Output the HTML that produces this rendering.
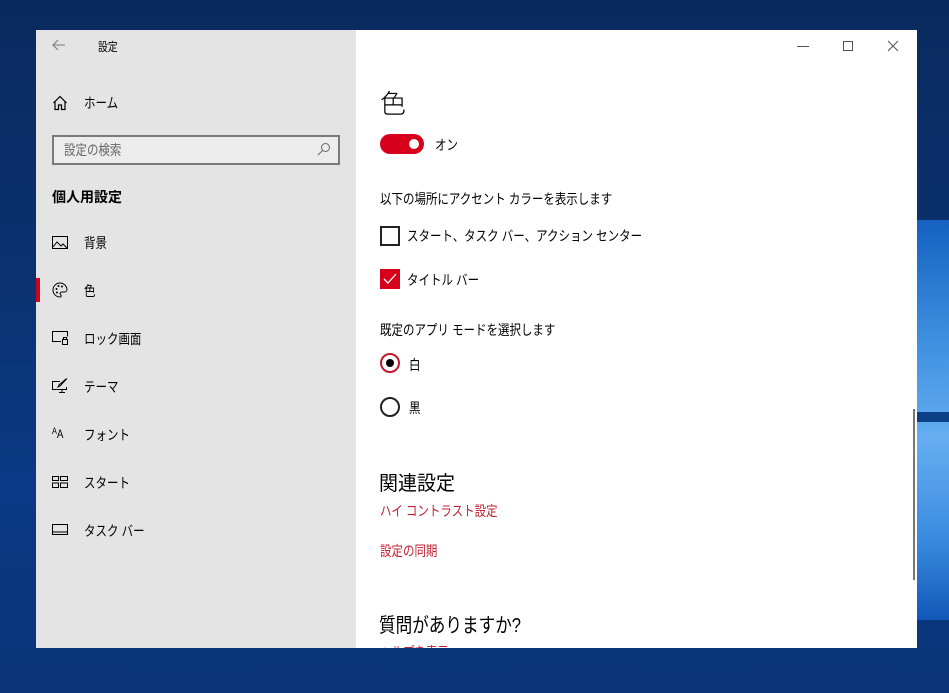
<!DOCTYPE html>
<html><head><meta charset="utf-8"><style>
*{margin:0;padding:0;box-sizing:border-box}
body{width:949px;height:693px;overflow:hidden;position:relative;font-family:"Liberation Sans","Noto Sans CJK JP",sans-serif;
background:linear-gradient(180deg,#0a2a5e 0%,#0a3270 40%,#0a3a86 70%,#093478 100%);}
.blue{position:absolute;left:917px;top:220px;width:32px;height:400px;background:linear-gradient(180deg,#1560c0 0%,#3f8fe0 30%,#64aef0 55%,#3b8ae0 80%,#1058b8 100%)}
.band{position:absolute;left:917px;top:412px;width:32px;height:10px;background:#0b3f86}
.win{position:absolute;left:36px;top:30px;width:881px;height:618px;background:#fff;overflow:hidden}
.side{position:absolute;left:0;top:0;width:320px;height:618px;background:#e4e4e4;color:#000;font-size:14px}
.t{position:absolute;white-space:nowrap;transform:scaleX(.82);transform-origin:0 0}
.n{transform:none}
.ico{position:absolute;left:16px}
.main{position:absolute;left:320px;top:0;right:0;bottom:0;font-size:14px;color:#000}
.red{color:#c31f33}
</style></head><body>
<div class="blue"></div><div class="band"></div>
<div class="win">
<div class="side">
 <svg class="ico" style="top:9px" width="14" height="12" viewBox="0 0 14 12"><path d="M13 6H1M6 1L1 6l5 5" stroke="#777" fill="none" stroke-width="1"/></svg>
 <div class="t" style="left:62px;top:8px;font-size:12px">設定</div>
 <svg class="ico" style="top:65px" width="16" height="16" viewBox="0 0 16 16"><path d="M1.5 8L8 1.5 14.5 8M3 6.5V14.5H6.5V10H9.5V14.5H13V6.5" stroke="#000" fill="none" stroke-width="1.2"/></svg>
 <div class="t" style="left:48px;top:63px">ホーム</div>
 <div style="position:absolute;left:16px;top:105px;width:288px;height:30px;border:2px solid #7a7a7a;background:#ececec"></div>
 <div class="t" style="left:28px;top:110px;color:#666">設定の検索</div>
 <svg style="position:absolute;left:281px;top:112px" width="14" height="14" viewBox="0 0 14 14"><circle cx="8.5" cy="5.5" r="4" stroke="#666" fill="none"/><path d="M5.5 8.5L1 13" stroke="#666"/></svg>
 <div class="t n" style="left:16px;top:157px;font-weight:bold">個人用設定</div>
 <svg class="ico" style="top:206px" width="16" height="13" viewBox="0 0 16 13"><rect x=".5" y=".5" width="15" height="12" stroke="#000" fill="none"/><path d="M1 11L5 6l4 4 2-2 4 4" stroke="#000" fill="none"/></svg>
 <div class="t" style="left:48px;top:203px">背景</div>
 <div style="position:absolute;left:0;top:248px;width:4px;height:24px;background:#d0021b"></div>
 <svg class="ico" style="top:252px" width="16" height="16" viewBox="0 0 16 16"><path d="M8 1a7 7 0 1 0 0 14c1.5 0 1.5-1.5.5-2.5s0-2.5 1.5-2.5h2.5A2.5 2.5 0 0 0 15 7.5 7 7 0 0 0 8 1z" stroke="#000" fill="none"/><circle cx="4.5" cy="7" r="1"/><circle cx="6.5" cy="4" r="1"/><circle cx="10" cy="4.5" r="1"/><circle cx="5" cy="10.5" r="1"/></svg>
 <div class="t" style="left:48px;top:251px">色</div>
 <svg class="ico" style="top:301px" width="16" height="14" viewBox="0 0 16 14"><path d="M9 10.5H.5V.5h15v5" stroke="#000" fill="none"/><rect x="10.5" y="8.5" width="5" height="5" stroke="#000" fill="none"/><path d="M11.5 8.5V6.5h3v2" stroke="#000" fill="none"/></svg>
 <div class="t" style="left:48px;top:299px">ロック画面</div>
 <svg class="ico" style="top:348px" width="16" height="16" viewBox="0 0 16 16"><path d="M8 3.5H.5v8h14V9M7 14.5h6M10 11.5v3" stroke="#000" fill="none"/><path d="M14.5 1L8 8l-2 1 1-2 7-6z" stroke="#000" fill="none"/></svg>
 <div class="t" style="left:48px;top:347px">テーマ</div>
 <div class="t" style="left:16px;top:396px;font-size:12px"><span style="font-size:9px;vertical-align:4px">A</span>A</div>
 <div class="t" style="left:48px;top:395px">フォント</div>
 <svg class="ico" style="top:446px" width="16" height="12" viewBox="0 0 16 12"><rect x=".5" y=".5" width="6" height="4" stroke="#000" fill="none"/><rect x="8.5" y=".5" width="7" height="4" stroke="#000" fill="none"/><rect x=".5" y="7" width="6" height="4.5" stroke="#000" fill="none"/><rect x="8.5" y="7" width="7" height="4.5" stroke="#000" fill="none"/></svg>
 <div class="t" style="left:48px;top:443px">スタート</div>
 <svg class="ico" style="top:494px" width="16" height="11" viewBox="0 0 16 11"><rect x=".5" y=".5" width="15" height="10" stroke="#000" fill="none"/><path d="M1 8h14" stroke="#000"/></svg>
 <div class="t" style="left:48px;top:491px">タスク バー</div>
</div>
<div class="main">
 <div style="position:absolute;left:441px;top:16px;width:12px;height:1px;background:#555"></div>
 <div style="position:absolute;left:487px;top:11px;width:10px;height:10px;border:1px solid #555"></div>
 <svg style="position:absolute;left:531px;top:10px" width="12" height="12" viewBox="0 0 12 12"><path d="M1 1l10 10M11 1L1 11" stroke="#555"/></svg>
 <div class="t n" style="left:24px;top:54px;font-size:26px;font-weight:300">色</div>
 <div style="position:absolute;left:24px;top:104px;width:44px;height:20px;border-radius:10px;background:#d6001c"></div>
 <div style="position:absolute;left:53px;top:109px;width:10px;height:10px;border-radius:50%;background:#fff"></div>
 <div class="t" style="left:79px;top:105px">オン</div>
 <div class="t" style="left:24px;top:159px">以下の場所にアクセント カラーを表示します</div>
 <div style="position:absolute;left:24px;top:196px;width:20px;height:20px;border:2px solid #222"></div>
 <div class="t" style="left:51px;top:196px">スタート、タスク バー、アクション センター</div>
 <div style="position:absolute;left:24px;top:239px;width:20px;height:20px;background:#d6001c"></div>
 <svg style="position:absolute;left:27px;top:243px" width="14" height="12" viewBox="0 0 14 12"><path d="M1 6l4 4 8-9" stroke="#fff" fill="none" stroke-width="1.3"/></svg>
 <div class="t" style="left:51px;top:240px">タイトル バー</div>
 <div class="t" style="left:24px;top:290px">既定のアプリ モードを選択します</div>
 <div style="position:absolute;left:24px;top:323px;width:20px;height:20px;border:2px solid #c01a2c;border-radius:50%"></div>
 <div style="position:absolute;left:30px;top:329px;width:8px;height:8px;background:#000;border-radius:50%"></div>
 <div class="t" style="left:53px;top:325px">白</div>
 <div style="position:absolute;left:24px;top:367px;width:20px;height:20px;border:2px solid #222;border-radius:50%"></div>
 <div class="t" style="left:53px;top:368px">黒</div>
 <div class="t" style="left:23px;top:437px;font-size:20px;transform:scaleX(.95)">関連設定</div>
 <div class="t red" style="left:24px;top:471px">ハイ コントラスト設定</div>
 <div class="t red" style="left:24px;top:511px">設定の同期</div>
 <div class="t" style="left:23px;top:579px;font-size:20px;transform:scaleX(.83)">質問がありますか?</div>
 <div class="t red" style="left:24px;top:612px">ヘルプを表示</div>
 <div style="position:absolute;left:557px;top:379px;width:2px;height:171px;background:#777"></div>
</div>
</div>
</body></html>
